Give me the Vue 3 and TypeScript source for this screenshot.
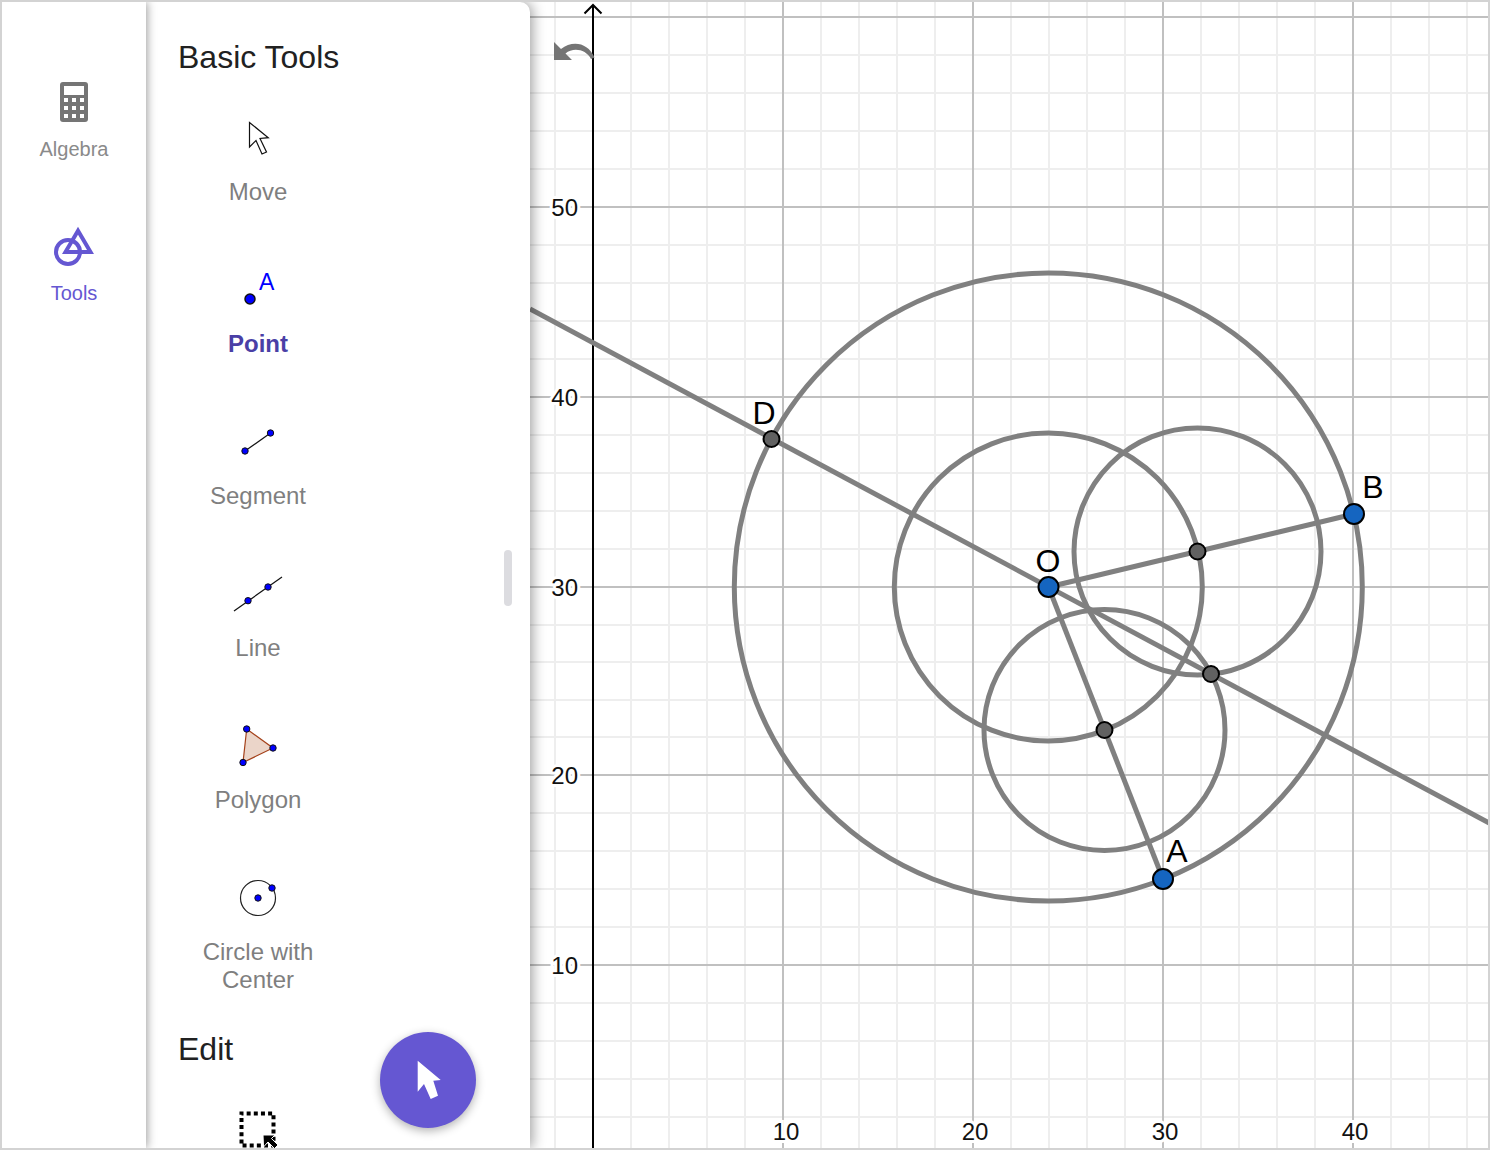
<script setup lang="ts">
interface Tool { name: string; active?: boolean; lines?: number }

const tools: Tool[] = [
  { name: 'Move' },
  { name: 'Point', active: true },
  { name: 'Segment' },
  { name: 'Line' },
  { name: 'Polygon' },
  { name: 'Circle with Center', lines: 2 },
]

const minorX: number[] = []
for (let x = 555; x < 1490; x += 38) if ((x - 593) % 190 !== 0) minorX.push(x)
const majorX = [783, 973, 1163, 1353]
const minorY: number[] = [
  55, 93, 131, 169, 245, 283, 321, 359, 435, 473, 511, 549,
  625, 662, 700, 737, 813, 851, 889, 927, 1003, 1041, 1079, 1117,
]
const majorY = [17, 207, 397, 587, 775, 965]

const yLabels = [
  { t: '50', y: 216 },
  { t: '40', y: 406 },
  { t: '30', y: 596 },
  { t: '20', y: 784 },
  { t: '10', y: 974 },
]
const xLabels = [
  { t: '10', x: 786 },
  { t: '20', x: 975 },
  { t: '30', x: 1165 },
  { t: '40', x: 1355 },
]
const circles = [
  { cx: 1048.3, cy: 587, r: 314 },
  { cx: 1048.3, cy: 587, r: 154 },
  { cx: 1197.5, cy: 551.5, r: 123.5 },
  { cx: 1104.5, cy: 730, r: 120.5 },
]
const grayPts = [
  { x: 771.5, y: 439 },
  { x: 1197.5, y: 551.5 },
  { x: 1211, y: 674 },
  { x: 1104.5, y: 730 },
]
const bluePts = [
  { x: 1048.5, y: 587 },
  { x: 1163, y: 879 },
  { x: 1354, y: 514 },
]
const ptLabels = [
  { t: 'D', x: 764, y: 424 },
  { t: 'O', x: 1048, y: 572 },
  { t: 'A', x: 1177, y: 862 },
  { t: 'B', x: 1373, y: 498 },
]
</script>

<template>
  <div class="frame">
    <nav class="rail">
      <div class="rail-item">
        <svg class="rail-icon" viewBox="50 76 48 52" width="48" height="52">
          <rect x="60" y="82" width="28" height="40" rx="3" fill="#757575" />
          <rect x="64" y="86" width="20" height="9" fill="#fff" />
          <g fill="#fff">
            <rect x="64" y="98" width="4" height="4" /><rect x="72" y="98" width="4" height="4" /><rect x="80" y="98" width="4" height="4" />
            <rect x="64" y="106" width="4" height="4" /><rect x="72" y="106" width="4" height="4" /><rect x="80" y="106" width="4" height="4" />
            <rect x="64" y="114" width="4" height="4" /><rect x="72" y="114" width="4" height="4" /><rect x="80" y="114" width="4" height="4" />
          </g>
        </svg>
        <span class="rail-label">Algebra</span>
      </div>
      <div class="rail-item rail-active">
        <svg class="rail-icon" viewBox="50 220 48 52" width="48" height="52">
          <circle cx="68" cy="252" r="12" fill="none" stroke="#6557d2" stroke-width="4" />
          <polygon points="78,230.700 65.500,252 90.500,252" fill="none" stroke="#6557d2" stroke-width="4" />
        </svg>
        <span class="rail-label">Tools</span>
      </div>
    </nav>

    <aside class="panel">
      <h2 class="heading">Basic Tools</h2>
      <div class="tools">
        <div v-for="(tool, i) in tools" :key="tool.name" class="tool" :class="{ 'tool-active': tool.active }">
          <svg class="tool-icon" viewBox="0 0 64 64" width="64" height="64">
            <g v-if="i === 0">
              <path d="M23.500 16.500V41L30 34.500 36 48 40.500 46 34 32.500 42.300 31.700Z" fill="#fff" stroke="#111" stroke-width="1.200" />
            </g>
            <g v-else-if="i === 1">
              <circle cx="24" cy="41" r="5" fill="#0000ff" stroke="#111" stroke-width="1.500" />
              <text x="33" y="32" class="icon-letter">A</text>
            </g>
            <g v-else-if="i === 2">
              <line x1="19" y1="41" x2="44.500" y2="23" stroke="#111" stroke-width="1.200" />
              <circle cx="19" cy="41" r="3.200" fill="#0000ff" stroke="#111" />
              <circle cx="44.500" cy="23" r="3.200" fill="#0000ff" stroke="#111" />
            </g>
            <g v-else-if="i === 3">
              <line x1="8" y1="49" x2="56" y2="15" stroke="#111" stroke-width="1.200" />
              <circle cx="22" cy="38.700" r="3.200" fill="#0000ff" stroke="#111" />
              <circle cx="42" cy="25" r="3.200" fill="#0000ff" stroke="#111" />
            </g>
            <g v-else-if="i === 4">
              <polygon points="20.700,15 47,34 17,48.500" fill="#ebd5c9" stroke="#a4411a" stroke-width="1.200" />
              <circle cx="20.700" cy="15" r="3.200" fill="#0000ff" stroke="#111" />
              <circle cx="47" cy="34" r="3.200" fill="#0000ff" stroke="#111" />
              <circle cx="17" cy="48.500" r="3.200" fill="#0000ff" stroke="#111" />
            </g>
            <g v-else>
              <circle cx="32" cy="32" r="17.500" fill="none" stroke="#222" stroke-width="1.200" />
              <circle cx="32" cy="32" r="3.200" fill="#0000ff" stroke="#111" />
              <circle cx="46" cy="22" r="3.200" fill="#0000ff" stroke="#111" />
            </g>
          </svg>
          <span class="tool-label">{{ tool.name }}</span>
        </div>
      </div>
      <h2 class="heading heading-edit">Edit</h2>
      <svg class="select-icon" viewBox="0 0 40 40" width="40" height="40">
        <rect x="4.500" y="4.500" width="32" height="32" fill="none" stroke="#000" stroke-width="4" stroke-dasharray="4 3.150" stroke-dashoffset="2" />
        <path d="M26 26H38L34.500 29.500 41 36 37.500 39.500 31 33 26.500 38Z" fill="#000" stroke="#fff" stroke-width="1" />
      </svg>
      <div class="scroll-thumb"></div>
      <div class="fab">
        <svg viewBox="0 0 96 96" width="96" height="96">
          <path d="M37.700 28.700 60.700 48 53.300 48.700 58 63.700 50.700 67 44 52 37.700 59.700Z" fill="#fff" />
        </svg>
      </div>
    </aside>

    <main class="graph">
      <svg class="canvas" viewBox="530 2 958 1146" width="958" height="1146">
        <g stroke="#eeeeee" stroke-width="2">
          <line v-for="x in minorX" :key="'mx' + x" :x1="x" y1="0" :x2="x" y2="1150" />
          <line v-for="y in minorY" :key="'my' + y" x1="530" :y1="y" x2="1490" :y2="y" />
        </g>
        <g stroke="#c0c0c0" stroke-width="2">
          <line v-for="x in majorX" :key="'Mx' + x" :x1="x" y1="0" :x2="x" y2="1150" />
          <line v-for="y in majorY" :key="'My' + y" x1="530" :y1="y" x2="1490" :y2="y" />
        </g>
        <g fill="none" stroke="#000" stroke-width="2">
          <line x1="593" y1="5" x2="593" y2="1150" />
          <path d="M584.500 13.500 593 5 601.500 13.500" />
        </g>
        <g class="axis-num">
          <text v-for="l in yLabels" :key="'y' + l.t" x="578" :y="l.y" text-anchor="end">{{ l.t }}</text>
          <text v-for="l in xLabels" :key="'x' + l.t" :x="l.x" y="1140" text-anchor="middle">{{ l.t }}</text>
        </g>
        <g fill="none" stroke="#808080" stroke-width="5">
          <circle v-for="(c, i) in circles" :key="'c' + i" :cx="c.cx" :cy="c.cy" :r="c.r" />
          <line x1="530" y1="309" x2="1490" y2="823.500" />
          <line x1="1048.500" y1="587" x2="1163" y2="879" />
          <line x1="1048.500" y1="587" x2="1354" y2="514" />
        </g>
        <circle v-for="(p, i) in grayPts" :key="'g' + i" :cx="p.x" :cy="p.y" r="8" fill="#616161" stroke="#000" stroke-width="2" />
        <circle v-for="(p, i) in bluePts" :key="'b' + i" :cx="p.x" :cy="p.y" r="10" fill="#1565c0" stroke="#000" stroke-width="2" />
        <text v-for="l in ptLabels" :key="l.t" :x="l.x" :y="l.y" class="pt-label" text-anchor="middle">{{ l.t }}</text>
        <path d="M554 42V60H572L565.500 53.500C573 47 586 49 591 59L594.500 57.500C588 42 572 40 561 49Z" fill="#757575" />
      </svg>
    </main>
  </div>
</template>

<style scoped>
.frame {
  width: 1490px;
  height: 1150px;
  box-sizing: border-box;
  border: 2px solid #d3d3d3;
  display: flex;
  overflow: hidden;
  background: #fff;
  font-family: "Liberation Sans", Arial, sans-serif;
}
.rail {
  width: 144px;
  flex: none;
  background: #fff;
  position: relative;
  z-index: 3;
  box-shadow: 1px 0 9px rgba(0, 0, 0, 0.4);
  padding-top: 74px;
  display: flex;
  flex-direction: column;
  align-items: center;
  gap: 57px;
}
.rail-item {
  display: flex;
  flex-direction: column;
  align-items: center;
  color: #8a8a8a;
}
.rail-icon {
  display: block;
}
.rail-label {
  font-size: 20px;
  line-height: 28px;
  margin-top: 7px;
}
.rail-active {
  color: #6557d2;
}
.panel {
  width: 384px;
  flex: none;
  position: relative;
  z-index: 2;
  background: #fff;
  border-top-right-radius: 10px;
  box-shadow: 2px 0 14px rgba(0, 0, 0, 0.4);
}
.heading {
  margin: 0;
  padding: 34px 0 0 32px;
  font-size: 32px;
  line-height: 42px;
  font-weight: 400;
  color: #212121;
}
.tools {
  margin-top: 28px;
  display: flex;
  flex-direction: column;
  gap: 52px;
  align-items: flex-start;
  padding-left: 32px;
}
.tool {
  width: 160px;
  display: flex;
  flex-direction: column;
  align-items: center;
  color: #7f7f7f;
}
.tool-icon {
  display: block;
  margin-bottom: 8px;
}
.tool-label {
  font-size: 24px;
  line-height: 28px;
  text-align: center;
}
.tool-active {
  color: #4a3fa6;
}
.tool-active .tool-label {
  font-weight: 700;
}
.icon-letter {
  font-size: 23px;
  fill: #0000ff;
}
.heading-edit {
  padding-top: 34px;
}
.select-icon {
  display: block;
  margin: 39px 0 0 91px;
}
.scroll-thumb {
  position: absolute;
  left: 358px;
  top: 548px;
  width: 8px;
  height: 56px;
  border-radius: 4px;
  background: #dcdce0;
}
.fab {
  position: absolute;
  left: 234px;
  top: 1030px;
  width: 96px;
  height: 96px;
  border-radius: 50%;
  background: #6557d2;
  box-shadow: 0 3px 10px rgba(0, 0, 0, 0.3);
}
.fab svg {
  display: block;
}
.graph {
  flex: 1;
  position: relative;
  min-width: 0;
}
.canvas {
  display: block;
}
.axis-num text {
  font-family: "Liberation Sans", sans-serif;
  font-size: 24px;
  fill: #111;
  stroke: #fff;
  stroke-width: 6px;
  paint-order: stroke;
}
.pt-label {
  font-family: "Liberation Sans", sans-serif;
  font-size: 32px;
  fill: #000;
}
</style>
